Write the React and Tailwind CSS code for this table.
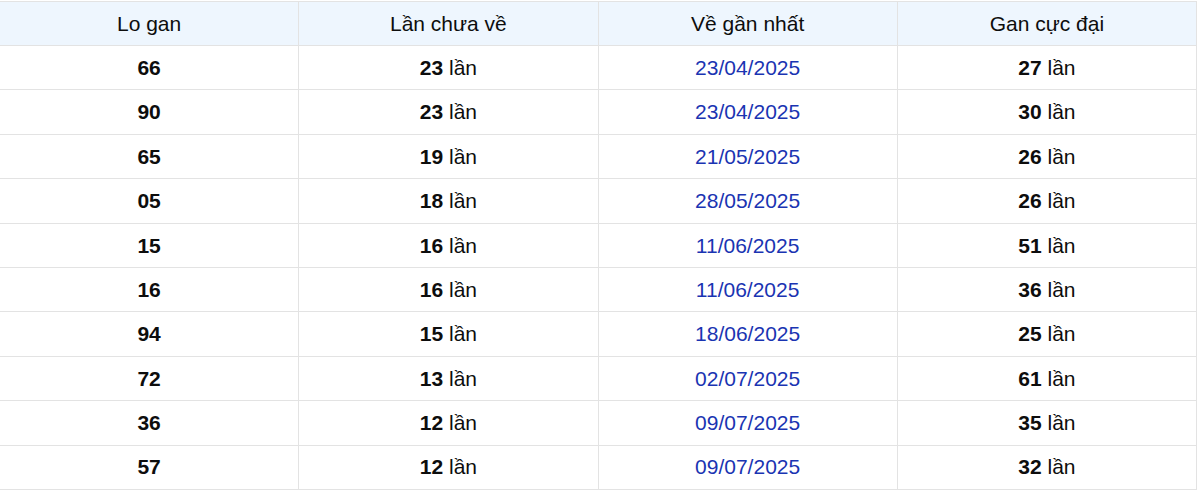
import React from 'react';

const rows = [
  ['66', 23, '23/04/2025', 27],
  ['90', 23, '23/04/2025', 30],
  ['65', 19, '21/05/2025', 26],
  ['05', 18, '28/05/2025', 26],
  ['15', 16, '11/06/2025', 51],
  ['16', 16, '11/06/2025', 36],
  ['94', 15, '18/06/2025', 25],
  ['72', 13, '02/07/2025', 61],
  ['36', 12, '09/07/2025', 35],
  ['57', 12, '09/07/2025', 32],
];

const cell = 'border border-[#e3e3e3] text-center align-middle p-0';

export default function App() {
  return (
    <div className="bg-white w-[1200px] h-[491px] overflow-hidden pt-px" style={{ fontFamily: '"Liberation Sans", Arial, sans-serif' }}>
      <table className="border-collapse w-[1198px] -ml-px table-fixed text-[21px] text-[#0d0d0d]">
        <thead>
          <tr className="bg-[#eef6fe] h-[44px]">
            <th className={`${cell} font-normal`}>Lo gan</th>
            <th className={`${cell} font-normal`}>Lần chưa về</th>
            <th className={`${cell} font-normal`}>Về gần nhất</th>
            <th className={`${cell} font-normal`}>Gan cực đại</th>
          </tr>
        </thead>
        <tbody>
          {rows.map(([num, miss, date, max]) => (
            <tr key={num} className="h-[44.4px]">
              <td className={`${cell} font-bold`}>{num}</td>
              <td className={cell}><b>{miss}</b> lần</td>
              <td className={`${cell} text-[#1a34b2]`}>{date}</td>
              <td className={cell}><b>{max}</b> lần</td>
            </tr>
          ))}
        </tbody>
      </table>
    </div>
  );
}
